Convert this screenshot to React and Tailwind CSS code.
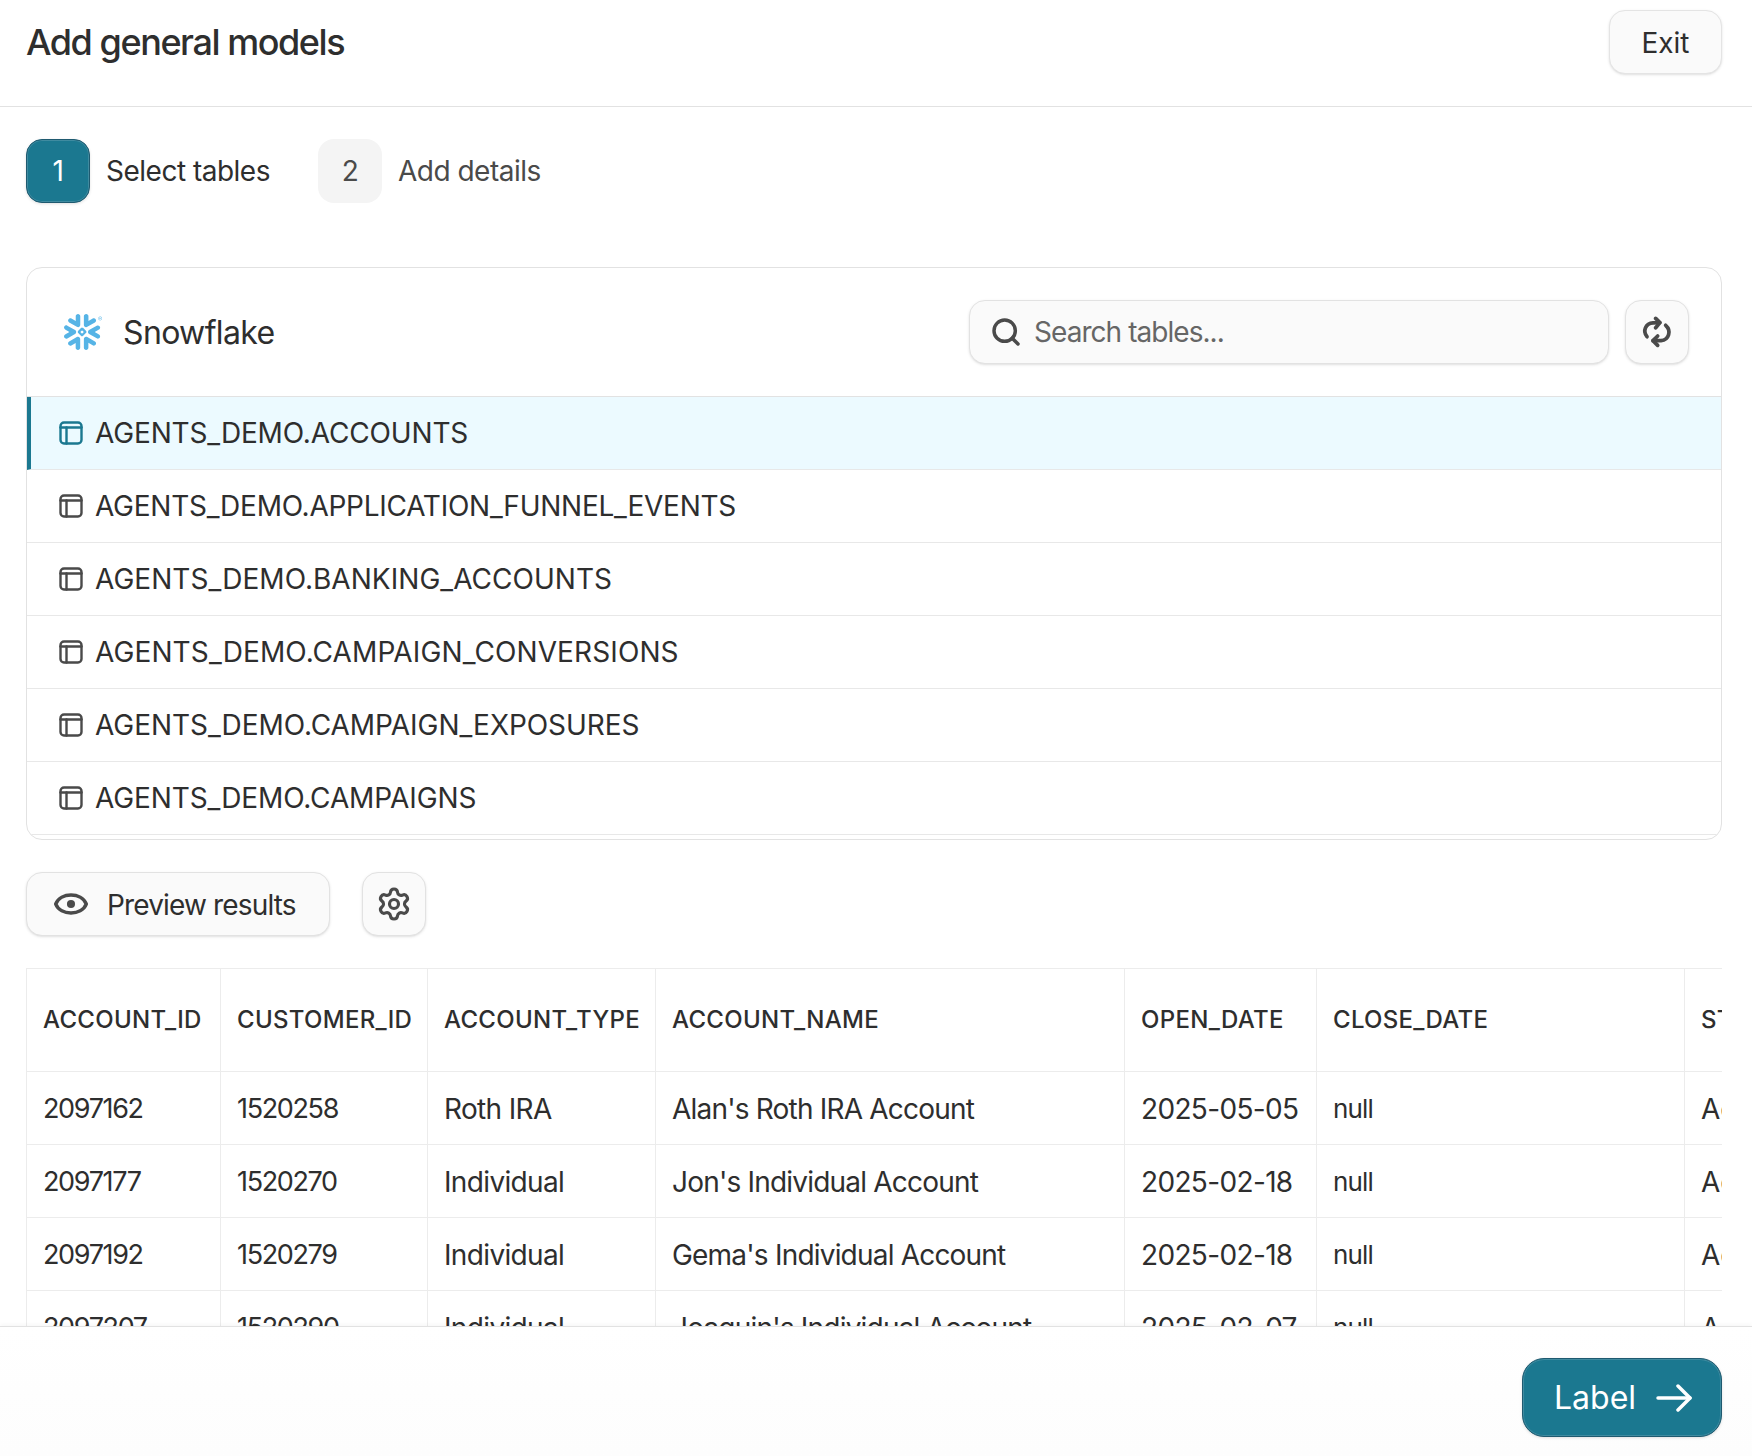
import { Search, Settings } from 'lucide-react'
import { SiSnowflake } from 'react-icons/si'

// tracking per row: the source font's letter widths differ from Inter's
const tables = [
  { name: 'AGENTS_DEMO.ACCOUNTS', tracking: 'tracking-[-0.15px]' },
  { name: 'AGENTS_DEMO.APPLICATION_FUNNEL_EVENTS', tracking: 'tracking-[-0.26px]' },
  { name: 'AGENTS_DEMO.BANKING_ACCOUNTS', tracking: 'tracking-[0.04px]' },
  { name: 'AGENTS_DEMO.CAMPAIGN_CONVERSIONS', tracking: 'tracking-[0.11px]' },
  { name: 'AGENTS_DEMO.CAMPAIGN_EXPOSURES', tracking: 'tracking-[-0.05px]' },
  { name: 'AGENTS_DEMO.CAMPAIGNS', tracking: 'tracking-[-0.1px]' },
]

const columns = ['ACCOUNT_ID', 'CUSTOMER_ID', 'ACCOUNT_TYPE', 'ACCOUNT_NAME', 'OPEN_DATE', 'CLOSE_DATE', 'STATUS']

// digits and "null" run narrower than Inter's, so each column gets its own tracking
const cellClasses = [
  'pt-[3px] text-[27px] tracking-[-1.35px]',
  'pt-[3px] text-[27px] tracking-[-1.35px]',
  'pt-[1px] text-[28px] tracking-[-0.65px]',
  'pt-[1px] text-[28px] tracking-[-0.8px]',
  'pt-[1px] text-[28px] tracking-[-0.65px]',
  'pt-[1px] text-[26px] tracking-[-0.85px]',
  'pt-[1px] text-[28px]',
]

const rows = [
  ['2097162', '1520258', 'Roth IRA', "Alan's Roth IRA Account", '2025-05-05', 'null', 'Active'],
  ['2097177', '1520270', 'Individual', "Jon's Individual Account", '2025-02-18', 'null', 'Active'],
  ['2097192', '1520279', 'Individual', "Gema's Individual Account", '2025-02-18', 'null', 'Active'],
  ['2097207', '1520290', 'Individual', "Joaquin's Individual Account", '2025-02-07', 'null', 'Active'],
]

function TableIcon({ className }) {
  return (
    <svg viewBox="0 0 24 24" className={className} fill="none" stroke="currentColor" strokeWidth="2.4" strokeLinecap="round" strokeLinejoin="round">
      <rect x="1.5" y="1.5" width="21" height="21" rx="3.5" />
      <path d="M1.5 6.5h21" />
      <path d="M7.5 6.5v16" />
    </svg>
  )
}

function RefreshIcon() {
  return (
    <svg viewBox="0 0 24 24" className="w-8 h-8 text-[#4a4a4a]" fill="none" stroke="currentColor" strokeWidth="2.8" strokeLinecap="round" strokeLinejoin="round">
      <path d="M4.5 15.5C1 11 3.5 5.5 9 5.2L14 5" />
      <path d="M11 1.8 14.2 5 11 8.8" />
      <path d="M18.5 7C23 11 21 18 15 18.5L9 18.5" />
      <path d="M12.5 15 9 18.5 12.5 22" />
    </svg>
  )
}

function EyeIcon() {
  return (
    <svg viewBox="0 0 24 24" className="w-9 h-9 text-[#4a4a4a]" fill="none" stroke="currentColor" strokeWidth="2.3" strokeLinejoin="round">
      <path d="M1.8 12C5 4 19 4 22.2 12C19 20 5 20 1.8 12Z" />
      <circle cx="12" cy="12" r="2.7" fill="currentColor" stroke="none" />
    </svg>
  )
}

function LongArrow() {
  return (
    <svg viewBox="0 0 36 28" className="w-9 h-7" fill="none" stroke="currentColor" strokeWidth="3.5" strokeLinecap="round" strokeLinejoin="round">
      <path d="M2 14h32" />
      <path d="M22 2 34 14 22 26" />
    </svg>
  )
}

function App() {
  return (
    <div className="h-screen flex flex-col overflow-hidden bg-white text-[#2e2e2e] font-['Inter',sans-serif]">
      <header className="h-[107px] shrink-0 flex items-start justify-between border-b border-[#e2e2e2] pl-[26px] pr-[30px] pt-[10px]">
        <h1 className="text-[36px] font-medium leading-[65px] tracking-[-0.04em]">Add general models</h1>
        <button className="h-16 w-[113px] pt-[1px] rounded-2xl border border-[#e4e4e4] bg-[#fafafa] shadow-sm text-[28px]">Exit</button>
      </header>

      <main className="flex-1 min-h-0 overflow-hidden pl-[26px] pr-[30px] pt-8">
        <div className="flex items-center h-16 text-[28px] tracking-[-0.5px]">
          <div className="w-16 h-16 rounded-2xl border border-[#1f5a70] bg-[#1b7890] text-white flex items-center justify-center shadow-[inset_0_0_0_1px_#3f8ba0,0_1px_3px_rgba(0,0,0,0.12)]">1</div>
          <span className="ml-4">Select tables</span>
          <div className="ml-[48px] w-16 h-16 rounded-2xl bg-[#f4f4f4] text-[#4a4a4a] flex items-center justify-center">2</div>
          <span className="ml-4 text-[#4a4a4a]">Add details</span>
        </div>

        <section className="mt-16 h-[573px] rounded-2xl border border-[#e2e2e2] overflow-hidden">
          <div className="h-[129px] flex items-center justify-between pl-[37px] pr-8 border-b border-[#e2e2e2]">
            <div className="flex items-center gap-[21px] text-[32px] tracking-[-0.65px]">
              <SiSnowflake className="w-[38px] h-[38px] text-[#56b4e6]" />
              <span className="pt-[2px]">Snowflake</span>
            </div>
            <div className="flex items-center gap-4">
              <div className="w-[640px] h-16 rounded-2xl border border-[#e2e2e2] bg-[#fafafa] shadow-sm flex items-center px-5 gap-3 text-[28px] tracking-[-0.95px] text-[#666666]">
                <Search className="w-8 h-8 text-[#4a4a4a]" strokeWidth={2.6} />
                <span>Search tables...</span>
              </div>
              <button className="w-16 h-16 rounded-2xl border border-[#e2e2e2] bg-[#fafafa] shadow-sm flex items-center justify-center">
                <RefreshIcon />
              </button>
            </div>
          </div>
          {tables.map((table, i) => (
            <div
              key={table.name}
              className={
                i === 0
                  ? 'h-[73px] flex items-center gap-[12px] pl-[28px] text-[28px] bg-[#ecfaff] border-l-4 border-b border-l-[#1b7890] border-b-[#e8e8e8]'
                  : 'h-[73px] flex items-center gap-[12px] pl-[32px] text-[28px] border-b border-[#e8e8e8]'
              }
            >
              <TableIcon className={i === 0 ? 'w-6 h-6 text-[#1b7890]' : 'w-6 h-6 text-[#4a4a4a]'} />
              <span className={table.tracking}>{table.name}</span>
            </div>
          ))}
        </section>

        <div className="mt-8 flex items-center gap-8">
          <button className="w-[304px] h-16 rounded-2xl border border-[#e2e2e2] bg-[#fafafa] shadow-sm flex items-center pl-[26px] gap-[18px] text-[28px] tracking-[-0.85px]">
            <EyeIcon />
            <span className="pt-[2px]">Preview results</span>
          </button>
          <button className="w-16 h-16 rounded-2xl border border-[#e2e2e2] bg-[#fafafa] shadow-sm flex items-center justify-center">
            <Settings className="w-9 h-9 text-[#4a4a4a]" strokeWidth={2.1} />
          </button>
        </div>

        <div className="mt-[32px] overflow-hidden">
          <table className="table-fixed border-collapse w-[1800px] border-t border-l border-[#ececec]">
            <colgroup>
              <col className="w-[194px]" />
              <col className="w-[207px]" />
              <col className="w-[228px]" />
              <col className="w-[469px]" />
              <col className="w-[192px]" />
              <col className="w-[368px]" />
              <col className="w-[142px]" />
            </colgroup>
            <thead>
              <tr className="h-[103px]">
                {columns.map((col) => (
                  <th key={col} className="border border-[#ececec] px-4 text-left text-[24px] tracking-[0.3px] font-medium whitespace-nowrap">{col}</th>
                ))}
              </tr>
            </thead>
            <tbody>
              {rows.map((row) => (
                <tr key={row[0]} className="h-[73px]">
                  {row.map((cell, i) => (
                    <td key={i} className={`border border-[#ececec] px-4 whitespace-nowrap ${cellClasses[i]}`}>{cell}</td>
                  ))}
                </tr>
              ))}
            </tbody>
          </table>
        </div>
      </main>

      <footer className="relative h-[130px] shrink-0 border-t border-[#e2e2e2] bg-linear-to-b from-white to-[#fdfdfd] shadow-[0_-2px_4px_rgba(0,0,0,0.03)] flex items-start justify-end pr-[30px] pt-[31px]">
        <button className="w-[200px] h-[79px] rounded-[22px] border border-[#1f5a70] bg-[#1b7890] text-white text-[32px] flex items-center pl-[31px] gap-[20px] shadow-[inset_0_0_0_1px_#3f8ba0,0_1px_3px_rgba(0,0,0,0.12)]">
          Label
          <LongArrow />
        </button>
      </footer>
    </div>
  )
}

export default App
